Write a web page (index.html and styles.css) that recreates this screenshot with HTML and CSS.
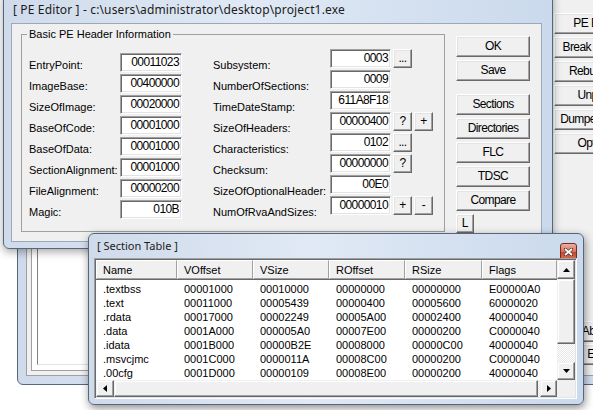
FILE: index.html
```html
<!DOCTYPE html>
<html lang="en">
<head>
    <meta charset="UTF-8">
    <title>[ PE Editor ]</title>
    <link rel="stylesheet" href="styles.css">
</head>
<body>
<div class="desktop">

    <!-- main window behind -->
    <div class="window main-win">
        <div class="client main-client">
            <div class="proc-list"><div class="proc-list-inner"></div></div>
            <div class="main-buttons">
                <div class="btn-group">
                    <button class="btn main-btn">PE Editor</button>
                    <button class="btn main-btn">Break &amp; Enter</button>
                    <button class="btn main-btn">Rebuild PE</button>
                    <button class="btn main-btn">Unpack</button>
                    <button class="btn main-btn">Dumper server</button>
                    <button class="btn main-btn">Options</button>
                </div>
                <div class="btn-group tight">
                    <button class="btn main-btn">About</button>
                    <button class="btn main-btn">Exit</button>
                </div>
            </div>
        </div>
    </div>

    <!-- PE Editor -->
    <div class="window pe-editor">
        <div class="titlebar">
            <span class="title">[ PE Editor ] - c:\users\administrator\desktop\project1.exe</span>
        </div>
        <div class="client pe-client">
            <fieldset class="group">
                <legend>Basic PE Header Information</legend>
                <div class="fields">
                    <span class="lbl l1">EntryPoint:</span>
                    <div class="edit v1">00011023</div>
                    <span class="lbl l2">Subsystem:</span>
                    <div class="edit v2">0003</div>
                    <button class="btn small b1">...</button>

                    <span class="lbl l1">ImageBase:</span>
                    <div class="edit v1">00400000</div>
                    <span class="lbl l2">NumberOfSections:</span>
                    <div class="edit v2">0009</div>

                    <span class="lbl l1">SizeOfImage:</span>
                    <div class="edit v1">00020000</div>
                    <span class="lbl l2">TimeDateStamp:</span>
                    <div class="edit v2">611A8F18</div>

                    <span class="lbl l1">BaseOfCode:</span>
                    <div class="edit v1">00001000</div>
                    <span class="lbl l2">SizeOfHeaders:</span>
                    <div class="edit v2">00000400</div>
                    <button class="btn small b1">?</button>
                    <button class="btn small b2">+</button>

                    <span class="lbl l1">BaseOfData:</span>
                    <div class="edit v1">00001000</div>
                    <span class="lbl l2">Characteristics:</span>
                    <div class="edit v2">0102</div>
                    <button class="btn small b1">...</button>

                    <span class="lbl l1">SectionAlignment:</span>
                    <div class="edit v1">00001000</div>
                    <span class="lbl l2">Checksum:</span>
                    <div class="edit v2">00000000</div>
                    <button class="btn small b1">?</button>

                    <span class="lbl l1">FileAlignment:</span>
                    <div class="edit v1">00000200</div>
                    <span class="lbl l2">SizeOfOptionalHeader:</span>
                    <div class="edit v2">00E0</div>

                    <span class="lbl l1">Magic:</span>
                    <div class="edit v1">010B</div>
                    <span class="lbl l2">NumOfRvaAndSizes:</span>
                    <div class="edit v2">00000010</div>
                    <button class="btn small b1">+</button>
                    <button class="btn small b2">-</button>
                </div>
            </fieldset>

            <div class="side-buttons">
                <button class="btn">OK</button>
                <button class="btn">Save</button>
                <button class="btn spaced">Sections</button>
                <button class="btn">Directories</button>
                <button class="btn">FLC</button>
                <button class="btn">TDSC</button>
                <button class="btn">Compare</button>
                <button class="btn btn-l">L</button>
            </div>
        </div>
    </div>

    <!-- Section Table -->
    <div class="window section-win">
        <div class="titlebar">
            <span class="title">[ Section Table ]</span>
            <span class="close-btn">
                <svg width="9" height="8" viewBox="0 0 9 8">
                    <path d="M1 1L8 7M8 1L1 7" stroke="#5a3b34" stroke-width="3.2" stroke-linecap="round"/>
                    <path d="M1 1L8 7M8 1L1 7" stroke="#fff" stroke-width="1.7"/>
                </svg>
            </span>
        </div>
        <div class="listview">
            <div class="lv-body">
                <div class="lv-header cols">
                    <span>Name</span><span>VOffset</span><span>VSize</span><span>ROffset</span><span>RSize</span><span>Flags</span>
                </div>
                <div class="lv-rows">
                    <div class="lv-row cols"><span>.textbss</span><span>00001000</span><span>00010000</span><span>00000000</span><span>00000000</span><span>E00000A0</span></div>
                    <div class="lv-row cols"><span>.text</span><span>00011000</span><span>00005439</span><span>00000400</span><span>00005600</span><span>60000020</span></div>
                    <div class="lv-row cols"><span>.rdata</span><span>00017000</span><span>00002249</span><span>00005A00</span><span>00002400</span><span>40000040</span></div>
                    <div class="lv-row cols"><span>.data</span><span>0001A000</span><span>000005A0</span><span>00007E00</span><span>00000200</span><span>C0000040</span></div>
                    <div class="lv-row cols"><span>.idata</span><span>0001B000</span><span>00000B2E</span><span>00008000</span><span>00000C00</span><span>40000040</span></div>
                    <div class="lv-row cols"><span>.msvcjmc</span><span>0001C000</span><span>0000011A</span><span>00008C00</span><span>00000200</span><span>C0000040</span></div>
                    <div class="lv-row cols"><span>.00cfg</span><span>0001D000</span><span>00000109</span><span>00008E00</span><span>00000200</span><span>40000040</span></div>
                </div>
            </div>
            <div class="vscroll">
                <div class="sb-btn up"><svg width="7" height="4" viewBox="0 0 7 4"><polygon points="0,4 7,4 3.5,0"/></svg></div>
                <div class="sb-thumb"></div>
                <div class="sb-track"></div>
                <div class="sb-btn down"><svg width="7" height="4" viewBox="0 0 7 4"><polygon points="0,0 7,0 3.5,4"/></svg></div>
            </div>
            <div class="hscroll">
                <div class="sb-btn left"><svg width="4" height="7" viewBox="0 0 4 7"><polygon points="4,0 4,7 0,3.5"/></svg></div>
                <div class="sb-thumb"></div>
                <div class="sb-track"></div>
                <div class="sb-btn right"><svg width="4" height="7" viewBox="0 0 4 7"><polygon points="0,0 0,7 4,3.5"/></svg></div>
            </div>
            <div class="sb-corner"></div>
        </div>
    </div>

</div>
</body>
</html>
```

FILE: styles.css
```css
* {
    box-sizing: border-box;
}
body {
    margin: 0;
    background: #fff;
    font-family: "Liberation Sans", Arial, sans-serif;
    font-size: 11px;
    color: #000;
}
.desktop {
    position: relative;
    width: 593px;
    height: 410px;
    overflow: hidden;
    background: #fff;
}

/* windows */
.window {
    position: absolute;
    display: flex;
    flex-direction: column;
    border: 1px solid #56677c;
    border-radius: 6px;
    background: linear-gradient(to right, #cfdbeb, #e0e9f5 45%, #cad9ec);
}
.main-win {
    left: 17px;
    top: -20px;
    width: 680px;
    height: 405px;
    padding: 8px;
    z-index: 1;
}
.pe-editor {
    left: 3px;
    top: -9px;
    width: 550px;
    height: 258px;
    padding: 0 10px 6px 7px;
    z-index: 2;
    box-shadow: 0 3px 9px rgba(0, 0, 0, 0.35);
}
.section-win {
    left: 88px;
    top: 233px;
    width: 496px;
    height: 172px;
    padding: 0 6px 6px 5px;
    z-index: 3;
    box-shadow: 1px 3px 9px rgba(0, 0, 0, 0.45);
}
.titlebar {
    flex: none;
    display: flex;
    justify-content: space-between;
    align-items: flex-start;
}
.title {
    font-family: "Noto Sans", "Open Sans", sans-serif;
    color: #1b1b1b;
    white-space: nowrap;
}
.pe-editor .titlebar {
    height: 31px;
    padding: 10px 0 0 2px;
}
.pe-editor .title {
    font-size: 12px;
    line-height: 15px;
    letter-spacing: 0.14px;
}
.section-win .titlebar {
    height: 24px;
    padding: 5px 0 0 3px;
}
.section-win .title {
    font-size: 11px;
    line-height: 14px;
}
.close-btn {
    width: 17px;
    height: 18px;
    margin-top: 4px;
    display: flex;
    justify-content: center;
    align-items: center;
    border: 1px solid #7a2a1c;
    border-radius: 3px;
    background: linear-gradient(#eab0a2, #d9705a 48%, #c5432b 52%, #d8785f);
}

.client {
    flex: 1;
    min-height: 0;
    background: #f0f0f0;
    border: 1px solid #9aa8b8;
}

/* classic controls */
.btn {
    height: 21px;
    padding: 0;
    font-family: "Liberation Sans", Arial, sans-serif;
    font-size: 12px;
    letter-spacing: -0.6px;
    line-height: 19px;
    color: #000;
    background: #f0f0f0;
    border: 1px solid;
    border-color: #fff #696969 #696969 #fff;
    border-radius: 0;
    box-shadow: inset -1px -1px 0 #a0a0a0, inset 1px 1px 0 #e3e3e3;
    text-align: center;
    white-space: nowrap;
}
.edit {
    height: 19px;
    padding-right: 2px;
    background: #fff;
    border: 1px solid;
    border-color: #a0a0a0 #fff #fff #a0a0a0;
    box-shadow: inset 1px 1px 0 #696969, inset -1px -1px 0 #e3e3e3;
    font-size: 12px;
    letter-spacing: -0.6px;
    line-height: 17px;
    text-align: right;
    white-space: nowrap;
}

/* main window */
.main-client {
    display: flex;
    padding: 4px;
    border-color: #a0a0a0;
}
.proc-list {
    flex: none;
    width: 519px;
    padding: 5px;
    background: #fff;
    border: 1px solid #a0a0a0;
}
.proc-list-inner {
    height: 100%;
    border: 1px solid;
    border-color: #808080 #e3e3e3 #e3e3e3 #808080;
}
.main-buttons {
    flex: none;
    width: 84px;
    margin-left: 4px;
    padding: 19px 0 6px;
    display: flex;
    flex-direction: column;
    justify-content: space-between;
}
.btn-group {
    display: flex;
    flex-direction: column;
    gap: 3px;
}
.btn-group.tight {
    gap: 2px;
}

/* PE editor */
.pe-client {
    display: flex;
    gap: 11px;
    padding: 4px 11px 9px 9px;
}
.group {
    flex: none;
    width: 424px;
    min-width: 0;
    margin: 0;
    padding: 8px 10px 0 7px;
    border: 1px solid #a0a0a0;
}
.group legend {
    margin-left: -2px;
    padding: 0 2px;
    line-height: 13px;
}
.fields {
    display: grid;
    grid-template-columns: 89px 62px 144px 61px 19px 19px;
    grid-template-rows: repeat(8, 21px);
    column-gap: 2px;
}
.lbl {
    margin-top: 10px;
    line-height: 13px;
    white-space: nowrap;
}
.l1 { grid-column: 1; }
.v1 { grid-column: 2; margin-top: 4px; }
.l2 { grid-column: 3; padding-left: 29px; }
.v2 { grid-column: 4; }
.b1 { grid-column: 5; }
.b2 { grid-column: 6; }
.btn.small {
    height: 19px;
    line-height: 17px;
}
.side-buttons {
    flex: none;
    width: 74px;
    padding-top: 8px;
    display: flex;
    flex-direction: column;
    gap: 3px;
}
.side-buttons .spaced {
    margin-top: 10px;
}
.btn.btn-l {
    width: 18px;
    height: 19px;
    line-height: 17px;
    letter-spacing: 0;
}

/* section table */
.listview {
    flex: 1;
    display: grid;
    grid-template-columns: 461px 18px;
    grid-template-rows: 120px 17px;
    padding: 1px;
    background: #fff;
    border: 1px solid;
    border-color: #a0a0a0 #fff #fff #a0a0a0;
    box-shadow: inset 1px 1px 0 #696969, inset -1px -1px 0 #e3e3e3;
}
.lv-body {
    overflow: hidden;
}
.cols {
    display: grid;
    grid-template-columns: 81px 76px 76px 76px 77px 75px;
}
.lv-header {
    height: 19px;
}
.lv-header span {
    padding: 2px 0 0 6px;
    line-height: 15px;
    background: #f0f0f0;
    border: 1px solid;
    border-color: #fff #a0a0a0 #a0a0a0 #fff;
    box-shadow: 0 1px 0 #696969;
}
.lv-rows {
    padding-top: 3px;
}
.lv-row {
    height: 14px;
    line-height: 14px;
}
.lv-row span {
    padding-left: 7px;
    white-space: nowrap;
    overflow: hidden;
}
.vscroll,
.hscroll {
    display: flex;
    background: repeating-conic-gradient(#fff 0 25%, #e6e6e6 0 50%) 0 0 / 2px 2px;
}
.vscroll {
    flex-direction: column;
}
.sb-btn,
.sb-thumb {
    flex: none;
    display: flex;
    justify-content: center;
    align-items: center;
    background: #f0f0f0;
    border: 1px solid;
    border-color: #f0f0f0 #696969 #696969 #f0f0f0;
    box-shadow: inset -1px -1px 0 #a0a0a0, inset 1px 1px 0 #fff;
}
.sb-btn svg {
    fill: #000;
}
.vscroll .up { height: 19px; }
.vscroll .sb-thumb { height: 65px; }
.vscroll .down { height: 18px; }
.sb-track { flex: 1; }
.hscroll .left { width: 18px; }
.hscroll .sb-thumb { width: 424px; }
.hscroll .right { width: 17px; }
.sb-corner {
    background: #f0f0f0;
}
```
